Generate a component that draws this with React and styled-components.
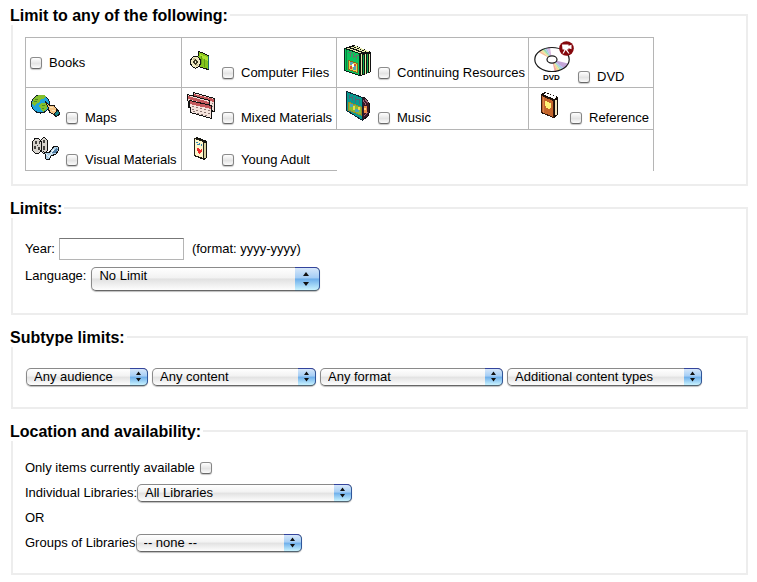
import React from "react";
import styled, { createGlobalStyle } from "styled-components";

const GlobalStyle = createGlobalStyle`
  * { box-sizing: border-box; }
  body {
    margin: 0;
    background: #fff;
    color: #000;
    font: 13px/14px "Liberation Sans", Arial, Helvetica, sans-serif;
  }
`;

const Form = styled.form`
  display: flex;
  flex-direction: column;
  gap: 12px;
  padding: 5px 9px 8px 11px;
`;

const Group = styled.fieldset`
  margin: 0;
  min-width: 0;
  border: 2px solid #ededed;
  padding: ${(p) => p.$top}px 12px ${(p) => p.$bottom}px;
`;

const Legend = styled.legend`
  margin-left: -15px;
  padding: 2px 2px 0 0;
  font-size: 16px;
  font-weight: bold;
  line-height: 18px;
`;

const Line = styled.div`
  display: flex;
  align-items: ${(p) => p.$align || "center"};
  gap: ${(p) => p.$gap || 0}px;
  min-height: ${(p) => p.$height || 0}px;
  margin-bottom: ${(p) => p.$after || 0}px;
  padding-left: ${(p) => p.$inset || 0}px;
`;

const Caption = styled.label`
  line-height: 18px;
  white-space: nowrap;
`;

const Hint = styled.span`
  margin-left: 4px;
`;

const YearInput = styled.input`
  width: 125px;
  height: 22px;
  padding: 2px 4px;
  font: inherit;
  background: #fff;
  border: 1px solid #b5b5b5;
  border-top-color: #777;
  border-radius: 0;
`;

const Checkbox = styled.input.attrs({ type: "checkbox" })`
  appearance: none;
  flex: none;
  width: 12px;
  height: 12px;
  margin: 0;
  border: 1px solid #858585;
  border-color: #8c8c8c #858585 #686868;
  border-radius: 3px;
  background: linear-gradient(#fff, #e4e4e4 55%, #fbfbfb);
  box-shadow: 0 1px 1px #c8c8c8;
  &:checked { background: #6fb2ee; }
`;

const MaterialTable = styled.table`
  border-collapse: separate;
  border-spacing: 0;
  table-layout: fixed;
  width: 629px;
  border-top: 1px solid #b5b5b5;
  border-left: 1px solid #b5b5b5;
`;

const Column = styled.col`
  width: ${(p) => p.$width}px;
`;

const Cell = styled.td`
  height: ${(p) => p.$height}px;
  padding: ${(p) => p.$pad};
  vertical-align: middle;
  border: 0 solid #b5b5b5;
  border-right-width: ${(p) => (p.$noRight ? 0 : 1)}px;
  border-bottom-width: ${(p) => (p.$noBottom ? 0 : 1)}px;
  &:nth-child(n + 3) { padding-left: 5px; }
`;

const Choice = styled.label`
  display: flex;
  align-items: flex-end;
  white-space: nowrap;
`;

const ChoiceText = styled.span`
  margin-left: 7px;
  line-height: 12px;
`;

const IconSvg = styled.svg`
  flex: none;
  display: block;
  margin: 0 4px 1px 0;
  overflow: visible;
`;

const Popup = styled.span`
  display: inline-grid;
  flex: 0 1 ${(p) => p.$width}px;
  min-width: 0;
  height: ${(p) => (p.$tall ? 24 : 18)}px;
`;

const Select = styled.select`
  grid-area: 1 / 1;
  appearance: none;
  width: 100%;
  height: 100%;
  margin: 0;
  padding: 0 22px ${(p) => (p.$tall ? 7 : 0)}px 7px;
  font: inherit;
  color: #000;
  border: 1px solid #8a8a8a;
  border-bottom-color: #666;
  border-radius: 5px;
  background: linear-gradient(#fff, #f2f2f2 45%, #e1e1e1 50%, #fdfdfd);
  box-shadow: 0 1px 1px #bdbdbd;
`;

const Cap = styled.svg`
  grid-area: 1 / 1;
  justify-self: end;
  z-index: 1;
  display: block;
  width: ${(p) => (p.$tall ? 25 : 18)}px;
  height: 100%;
  pointer-events: none;
  border: 1px solid #34569c;
  border-color: #34449c #30569a #526471;
  border-left: 0;
  border-radius: 0 5px 5px 0;
  background: linear-gradient(#d6e7fa, #a4cdf5 45%, #6daeea 50%, #c9f3ff);
`;

function PopupMenu({ id, width, tall, label, value }) {
  return (
    <Popup $width={width} $tall={tall}>
      <Select id={id} aria-label={label} $tall={tall}>
        <option>{value}</option>
      </Select>
      <Cap $tall={tall} viewBox={tall ? "0 0 24 22" : "0 0 17 16"} aria-hidden="true">
        {tall ? (
          <path d="M8 8L11 4L14 8ZM8 14L11 18L14 14Z" fill="#111" />
        ) : (
          <path d="M6 6L8.5 2.5L11 6ZM6 9L8.5 12.5L11 9Z" fill="#111" />
        )}
      </Cap>
    </Popup>
  );
}

function Icon({ size = 32, children, smooth }) {
  return (
    <IconSvg
      width={size}
      height={size}
      viewBox={`0 0 ${size} ${size}`}
      shapeRendering={smooth ? "auto" : "crispEdges"}
      aria-hidden="true"
    >
      {children}
    </IconSvg>
  );
}

const ComputerIcon = () => (
  <Icon>
    <path d="M12.5 5.5L15.5 6.5L22.5 9.5V23.5L18.5 22.5L11 20Z" fill="#85c41d" stroke="#111" />
    <path d="M14 8l4 2 4 1v4l-4-2-3-1z" fill="#aee234" />
    <path d="M18 13v8M15 10v8" stroke="#5f9c15" />
    <path d="M22 10v13" stroke="#18706a" />
    <ellipse cx="9.5" cy="16" rx="5" ry="6" fill="#f0eac3" stroke="#111" />
    <path d="M7 12h2v2H7zM10 18h2v2h-2z" fill="#c9c195" />
    <path d="M9 13h1v1h1v1h1v2h-1v1h-1v1H9v-1H8v-1H7v-2h1v-1h1z" fill="#3c3823" />
    <path d="M9 15h1v2H9z" fill="#f3efd5" />
  </Icon>
);

const SerialsIcon = () => (
  <Icon>
    <path d="M2 2L12 -1L29 6V26L19 30L3 25Z" fill="#111" />
    <path d="M5 2l14 5M9 1l14 5M12 0l15 6" stroke="#e8eeb0" />
    <path d="M19.5 8v21M23.5 8v20M27.5 8v18" stroke="#dff0a0" />
    <path d="M21.5 9v19M25.5 8v19" stroke="#07a84b" />
    <path d="M2.5 2.5L17.5 7.5V29.5L2.5 24.5Z" fill="#0ac55c" stroke="#06261a" />
    <path d="M4.5 4v20" stroke="#068743" />
    <path d="M6 6l4 1M8 7v4M11 7v5M11 10l3 1M14 9v4M15 9l2 1" stroke="#66746a" fill="none" />
    <path d="M6.5 14.5L15.5 17.5V26.5L6.5 23.5Z" fill="#ead646" stroke="#8c661c" />
    <path d="M8 16h3v3H8zM11 20h3v4h-3z" fill="#5aa1b8" />
    <path d="M8 20h2v3H8zM12 18h2v2h-2z" fill="#d84d36" />
    <path d="M10 18h2v3h-2z" fill="#fff" />
  </Icon>
);

const DvdIcon = () => (
  <Icon size={40} smooth>
    <ellipse cx="18" cy="17.5" rx="17" ry="12" fill="#fff" />
    <path d="M18 17.5L5 10.5L6.5 8.8Z" fill="#f8bd9a" />
    <path d="M18 17.5L6.5 8.8L8.5 7.6Z" fill="#f0e59a" />
    <path d="M18 17.5L8.5 7.6L11 6.6Z" fill="#9bdcae" />
    <path d="M18 17.5L11 6.6L13 6Z" fill="#a9c4ec" />
    <path d="M18 17.5L13 6L16 5.6Z" fill="#d7b8e0" />
    <path d="M18 17.5L34 21.5Q33 24 29.5 26Z" fill="#c3a6d8" />
    <path d="M18 17.5L29.5 26L27.5 27.2Z" fill="#a5c6ec" />
    <path d="M18 17.5L27.5 27.2L25.5 28Z" fill="#aee3b7" />
    <path d="M18 17.5L25.5 28L23 28.8Z" fill="#f3dc8f" />
    <path d="M18 17.5L23 28.8L20.5 29.3Z" fill="#f2a9a0" />
    <ellipse cx="18" cy="17.5" rx="17.2" ry="12" fill="none" stroke="#191919" strokeWidth="1.2" />
    <ellipse cx="18" cy="17.5" rx="5" ry="3.6" fill="#fff" stroke="#191919" strokeWidth="1.2" />
    <circle cx="32.5" cy="6.5" r="7.3" fill="#85070c" />
    <path d="M28 2.5h6.5v1.2l3-1v4.5l-3-1v1.2h-1.5l2.5 4h-1.2l-2.6-3.4-2 3.4h-1.2l2-4H28.5z" fill="#fff" />
    <text x="9" y="38" fontFamily="Liberation Sans, Arial, sans-serif" fontSize="8" fontWeight="bold">DVD</text>
  </Icon>
);

const MapsIcon = () => (
  <Icon>
    <circle cx="10.5" cy="13" r="9" fill="#20a4dc" stroke="#101d28" />
    <path d="M4 7l5-3h5l2 1-2 3h-3l-1 3-3 1-2 3-3-2 1-3z" fill="#83bf2d" />
    <path d="M11 12h4l3 3-2 4-3 2-2-3-2-3z" fill="#83bf2d" />
    <path d="M5 8h3M4 10h3M12 14h3M12 17h2" stroke="#4c8b21" />
    <path d="M15.5 10.5L19 14L24 14.5L27.5 19L24 23.5L19.5 21.5L18.5 17.5Z" fill="#f5c486" stroke="#1d1710" />
    <path d="M20 16h3v1h-3zM22 19h3v1h-3z" fill="#ffe6b5" />
    <path d="M28 19l2 4-4 3-2-3z" fill="#16858a" stroke="#111" />
  </Icon>
);

const CalendarIcon = () => (
  <Icon>
    <path d="M7.5 1.5L28.5 7.5V20.5L8.5 15.5Z" fill="#f3dcd6" stroke="#111" />
    <path d="M8 3l20 5v3L8 6z" fill="#c4585b" />
    <path d="M1.5 3.5L23.5 9.5V22.5L2.5 16.5Z" fill="#f3dcd6" stroke="#111" />
    <path d="M2 5l21 6v3L2 8z" fill="#c4585b" />
    <path d="M3.5 9.5L25.5 14.5V27.5L4.5 21.5Z" fill="#f4e3dc" stroke="#111" />
    <path d="M4 10l21 5v3L4 13z" fill="#c4585b" />
    <path
      d="M6 15h2v1H6zM10 16h2v1h-2zM14 17h2v1h-2zM18 18h2v1h-2zM22 19h2v1h-2zM6 18h2v1H6zM10 19h2v1h-2zM14 20h2v1h-2zM18 21h2v1h-2zM22 22h2v1h-2zM7 20h2v1H7zM11 22h2v1h-2zM15 23h2v1h-2zM19 24h2v1h-2zM26 12h1v1h-1zM26 15h1v1h-1z"
      fill="#8c7672"
    />
  </Icon>
);

const MusicIcon = () => (
  <Icon>
    <path d="M19 6l4 1 4 5 1 7-2 6-5 4z" fill="#3b1827" stroke="#111" />
    <path d="M21 9l3 5M23 8l3 4M22 25l4-4" stroke="#9d6277" />
    <path d="M22 15h3v7h-3z" fill="#ee8b45" />
    <path d="M22 17h2v2h-2z" fill="#ffd584" />
    <path d="M4.5 0.5L20.5 6.5V29.5L4.5 19.5Z" fill="#079b90" stroke="#102332" />
    <path d="M7 4v4M7 6l3 1M10 5v5M13 6v6M13 8l4 1M17 8v5" stroke="#566572" />
    <path d="M6 11l13 5v8L6 19z" fill="#83bd35" stroke="#a18627" />
    <path d="M8 13h3v3H8zM13 18h4v3h-4z" fill="#49a2bd" />
    <path d="M11 15h2v4h-2zM16 16h2v3h-2z" fill="#ead94c" />
  </Icon>
);

const ReferenceIcon = () => (
  <Icon>
    <path d="M7 3l4-2 13 5v18l-4 3L7 22z" fill="#160d08" />
    <path d="M9 3l3-1 11 4-3 2z" fill="#fff" />
    <path d="M21 9h2v15h-2z" fill="#f3e2b8" />
    <path d="M7.5 4.5L19.5 9.5V26.5L7.5 21.5Z" fill="#c4652b" stroke="#35180b" />
    <path d="M9.5 6v16" stroke="#d98450" />
    <path d="M11 10h2v1h2v1h2v5h-1v1h-2v-1h-2v-2h-1z" fill="#fff377" />
  </Icon>
);

const FilmIcon = () => (
  <Icon>
    <ellipse cx="14" cy="12.5" rx="4" ry="8" fill="#d8d4ce" stroke="#111" />
    <ellipse cx="7" cy="13" rx="5" ry="8" fill="#d8d4ce" stroke="#111" />
    <path d="M5 8h2v3H5zM9 8h1v3H9zM4 13h2v3H4zM8 14h2v3H8zM7 12h1v1H7zM13 7h2v3h-2zM13 13h2v4h-2z" fill="#454340" />
    <path d="M14 19l5 1 5-7 4 1 1 3-3 4-5 2-2 4-3-1-1-5z" fill="#b1d1e7" stroke="#111" />
    <path d="M16 21l3 3 5-8" fill="none" stroke="#eaf6fb" />
    <path d="M22 20l4-5 2 1-2 4z" fill="#517fa7" />
  </Icon>
);

const YoungIcon = () => (
  <Icon>
    <path d="M8 5l3-1 10 4v17l-3 2-10-4z" fill="#161610" />
    <path d="M19 10v15" stroke="#dbd5a1" strokeWidth="2" />
    <path d="M8.5 5.5L17.5 8.5V25.5L8.5 22.5Z" fill="#fff7ca" stroke="#242116" />
    <path d="M10 9h2v1h-2zM11 11h2v1h-2zM13 10h1v2h-1zM15 11h1v2h-1z" fill="#3887b6" />
    <path d="M11 15h2v1h1v1h1v-1h1v3h-1v1h-1v1h-1v-1h-1v-2h-1z" fill="#ec282b" />
  </Icon>
);

const ROWS = [
  { height: 50, pad: "4px", items: [["Books"], ["Computer Files", ComputerIcon], ["Continuing Resources", SerialsIcon], ["DVD", DvdIcon]] },
  { height: 42, pad: "3px 4px 5px", items: [["Maps", MapsIcon], ["Mixed Materials", CalendarIcon], ["Music", MusicIcon], ["Reference", ReferenceIcon]] },
  { height: 41, pad: "3px 4px 4px", items: [["Visual Materials", FilmIcon], ["Young Adult", YoungIcon]] },
];

export default function App() {
  return (
    <>
      <GlobalStyle />
      <Form>
        <Group $top={12} $bottom={13}>
          <Legend>Limit to any of the following:</Legend>
          <MaterialTable>
            <colgroup>
              <Column $width={156} />
              <Column $width={155} />
              <Column $width={192} />
              <Column $width={125} />
            </colgroup>
            <tbody>
              {ROWS.map((row) => (
                <tr key={row.height}>
                  {row.items.map(([name, Picture], i) => (
                    <Cell key={name} $height={row.height} $pad={row.pad} $noRight={row.items.length === 2 && i === 1}>
                      <Choice>
                        {Picture && <Picture />}
                        <Checkbox name="material" value={name} />
                        <ChoiceText>{name}</ChoiceText>
                      </Choice>
                    </Cell>
                  ))}
                  {row.items.length === 2 && <Cell colSpan={2} $height={row.height} $pad={row.pad} $noBottom />}
                </tr>
              ))}
            </tbody>
          </MaterialTable>
        </Group>

        <Group $top={20} $bottom={22}>
          <Legend>Limits:</Legend>
          <Line $gap={4} $after={7}>
            <Caption htmlFor="year">Year:</Caption>
            <YearInput id="year" type="text" />
            <Hint>(format: yyyy-yyyy)</Hint>
          </Line>
          <Line $gap={5} $align="flex-start">
            <Caption htmlFor="language">Language:</Caption>
            <PopupMenu id="language" width={229} tall value="No Limit" />
          </Line>
        </Group>

        <Group $top={21} $bottom={21}>
          <Legend>Subtype limits:</Legend>
          <Line $gap={4} $inset={1}>
            <PopupMenu width={122} label="Audience" value="Any audience" />
            <PopupMenu width={164} label="Content" value="Any content" />
            <PopupMenu width={183} label="Format" value="Any format" />
            <PopupMenu width={195} label="Content types" value="Additional content types" />
          </Line>
        </Group>

        <Group $top={15} $bottom={18}>
          <Legend>Location and availability:</Legend>
          <Line $gap={5} $height={24} $after={1}>
            <Caption htmlFor="available">Only items currently available</Caption>
            <Checkbox id="available" />
          </Line>
          <Line $height={24} $after={1}>
            <Caption htmlFor="library">Individual Libraries:</Caption>
            <PopupMenu id="library" width={215} value="All Libraries" />
          </Line>
          <Line $height={24} $after={1}>OR</Line>
          <Line $height={24}>
            <Caption htmlFor="groups">Groups of Libraries</Caption>
            <PopupMenu id="groups" width={166} value="-- none --" />
          </Line>
        </Group>
      </Form>
    </>
  );
}
